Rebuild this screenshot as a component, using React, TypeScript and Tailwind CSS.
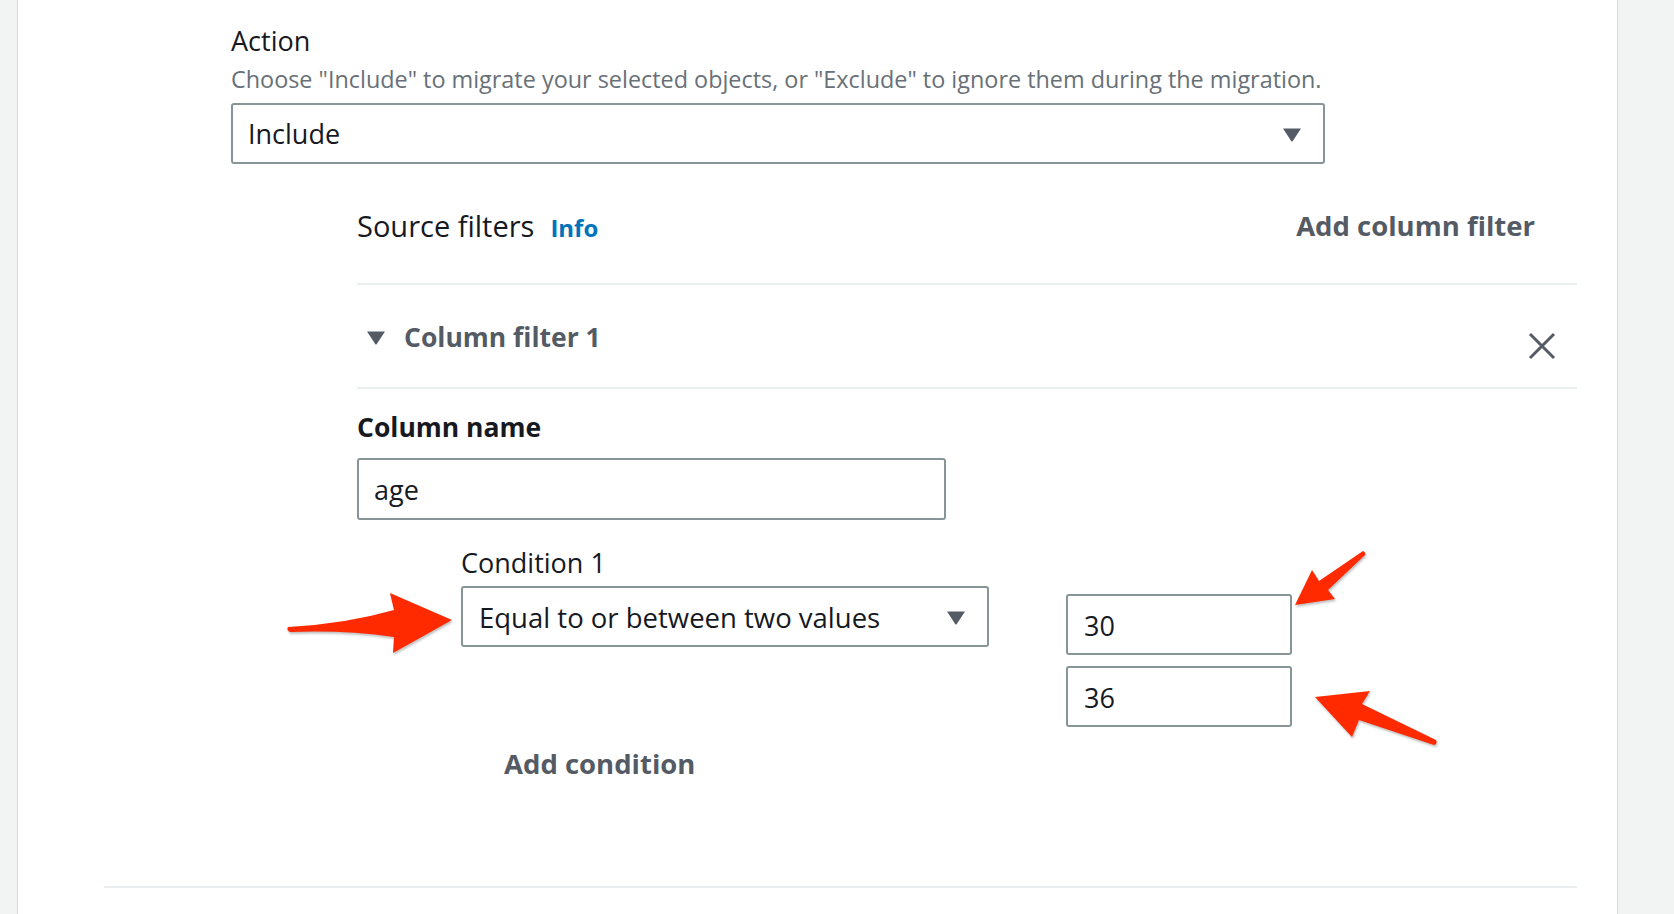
function Caret({ className = '' }: { className?: string }) {
  return (
    <svg width="20" height="15" viewBox="0 0 20 15" className={className}>
      <path d="M1 1.5 L19 1.5 L10.8 14 Q10 15 9.2 14 Z" fill="#545b64" />
    </svg>
  );
}

function CloseIcon() {
  return (
    <svg width="28" height="28" viewBox="0 0 28 28" className="mt-[47px]">
      <path d="M2 2 L26 26 M26 2 L2 26" stroke="#545b64" strokeWidth="3" strokeLinecap="butt" fill="none" />
    </svg>
  );
}

function Arrows() {
  return (
    <svg className="pointer-events-none absolute inset-0 h-full w-full drop-shadow-[1px_2px_1px_rgba(0,0,0,0.25)]" viewBox="0 0 1674 914">
      {/* left arrow pointing at the condition select */}
      <path d="M288 627 Q345 624 394 610 L390 593 L452 620 L393 653 L394 637 Q345 630 290 632 Q286 630 288 627 Z" fill="#ff2a00" />
      {/* arrow pointing at the first value */}
      <path d="M1363 551 Q1366 552 1365 555 L1328 590 L1335 599 L1295 605 L1312 570 L1319 581 Z" fill="#ff2a00" />
      {/* arrow pointing at the second value */}
      <path d="M1315 697 L1370 691 L1362 704 L1436 740 Q1438 744 1434 745 L1359 720 L1352 737 Z" fill="#ff2a00" />
    </svg>
  );
}

export default function App() {
  return (
    <div className="relative flex h-[914px] w-full overflow-hidden bg-[#f2f3f3] font-['Open_Sans',sans-serif] text-[#16191f]">
      <div className="w-[18px] shrink-0 border-r border-[#d5dbdb]" />

      <main className="flex-1 bg-white pl-[86px] pr-[40px]">
        {/* Action */}
        <section className="pl-[127px] pt-[25px]">
          <div className="text-[27px] leading-[32px]">Action</div>
          <p className="mt-[7px] text-[23.4px] leading-[30px] text-[#687078]">
            Choose "Include" to migrate your selected objects, or "Exclude" to ignore them during the migration.
          </p>
          <div className="mt-[9px] flex h-[61px] w-[1094px] items-center justify-between rounded-[3px] border-2 border-[#879596] pl-[15px] pr-[21px] pt-[2px] text-[27px]">
            <span>Include</span>
            <Caret />
          </div>
        </section>

        {/* Source filters */}
        <section className="ml-[253px] mt-[44px]">
          <div className="flex h-[36px] items-center justify-between pr-[42px]">
            <div className="flex items-baseline gap-[16px]">
              <span className="text-[29px]">Source filters</span>
              <span className="text-[24px] font-bold text-[#0073bb]">Info</span>
            </div>
            <span className="text-[27.5px] font-bold text-[#545b64]">Add column filter</span>
          </div>
          <div className="mt-[39px] h-[2px] bg-[#eaeded]" />

          <div className="flex h-[102px] justify-between pl-[9px] pr-[21px]">
            <div className="mt-[36px] flex h-[32px] items-center gap-[18px]">
              <Caret />
              <span className="text-[26.5px] font-bold leading-[32px] text-[#545b64]">Column filter 1</span>
            </div>
            <CloseIcon />
          </div>
          <div className="h-[2px] bg-[#eaeded]" />

          <div className="mt-[22px] text-[26.5px] font-bold leading-[32px]">Column name</div>
          <div className="mt-[15px] flex h-[62px] w-[589px] items-center rounded-[3px] border-2 border-[#879596] pl-[15px] pt-[3px] text-[27px]">
            age
          </div>

          {/* Condition */}
          <div className="ml-[104px] mt-[27px]">
            <div className="text-[27px] leading-[32px]">Condition 1</div>
            <div className="mt-[7px] flex items-start">
              <div className="flex h-[61px] w-[528px] items-center justify-between rounded-[3px] border-2 border-[#879596] pl-[16px] pr-[21px] pt-[2px] text-[27.5px]">
                <span>Equal to or between two values</span>
                <Caret />
              </div>
              <div className="ml-[77px] mt-[8px] flex flex-col gap-[11px]">
                <div className="flex h-[61px] w-[226px] items-center rounded-[3px] border-2 border-[#879596] pl-[16px] pt-[3px] text-[27px]">30</div>
                <div className="flex h-[61px] w-[226px] items-center rounded-[3px] border-2 border-[#879596] pl-[16px] pt-[3px] text-[27px]">36</div>
              </div>
            </div>
            <div className="ml-[43px] mt-[21px] text-[27.5px] font-bold leading-[32px] text-[#545b64]">Add condition</div>
          </div>
        </section>

        <div className="mt-[106px] h-[2px] bg-[#eaeded]" />
      </main>

      <div className="w-[57px] shrink-0 border-l border-[#d5dbdb]" />
      <Arrows />
    </div>
  );
}
